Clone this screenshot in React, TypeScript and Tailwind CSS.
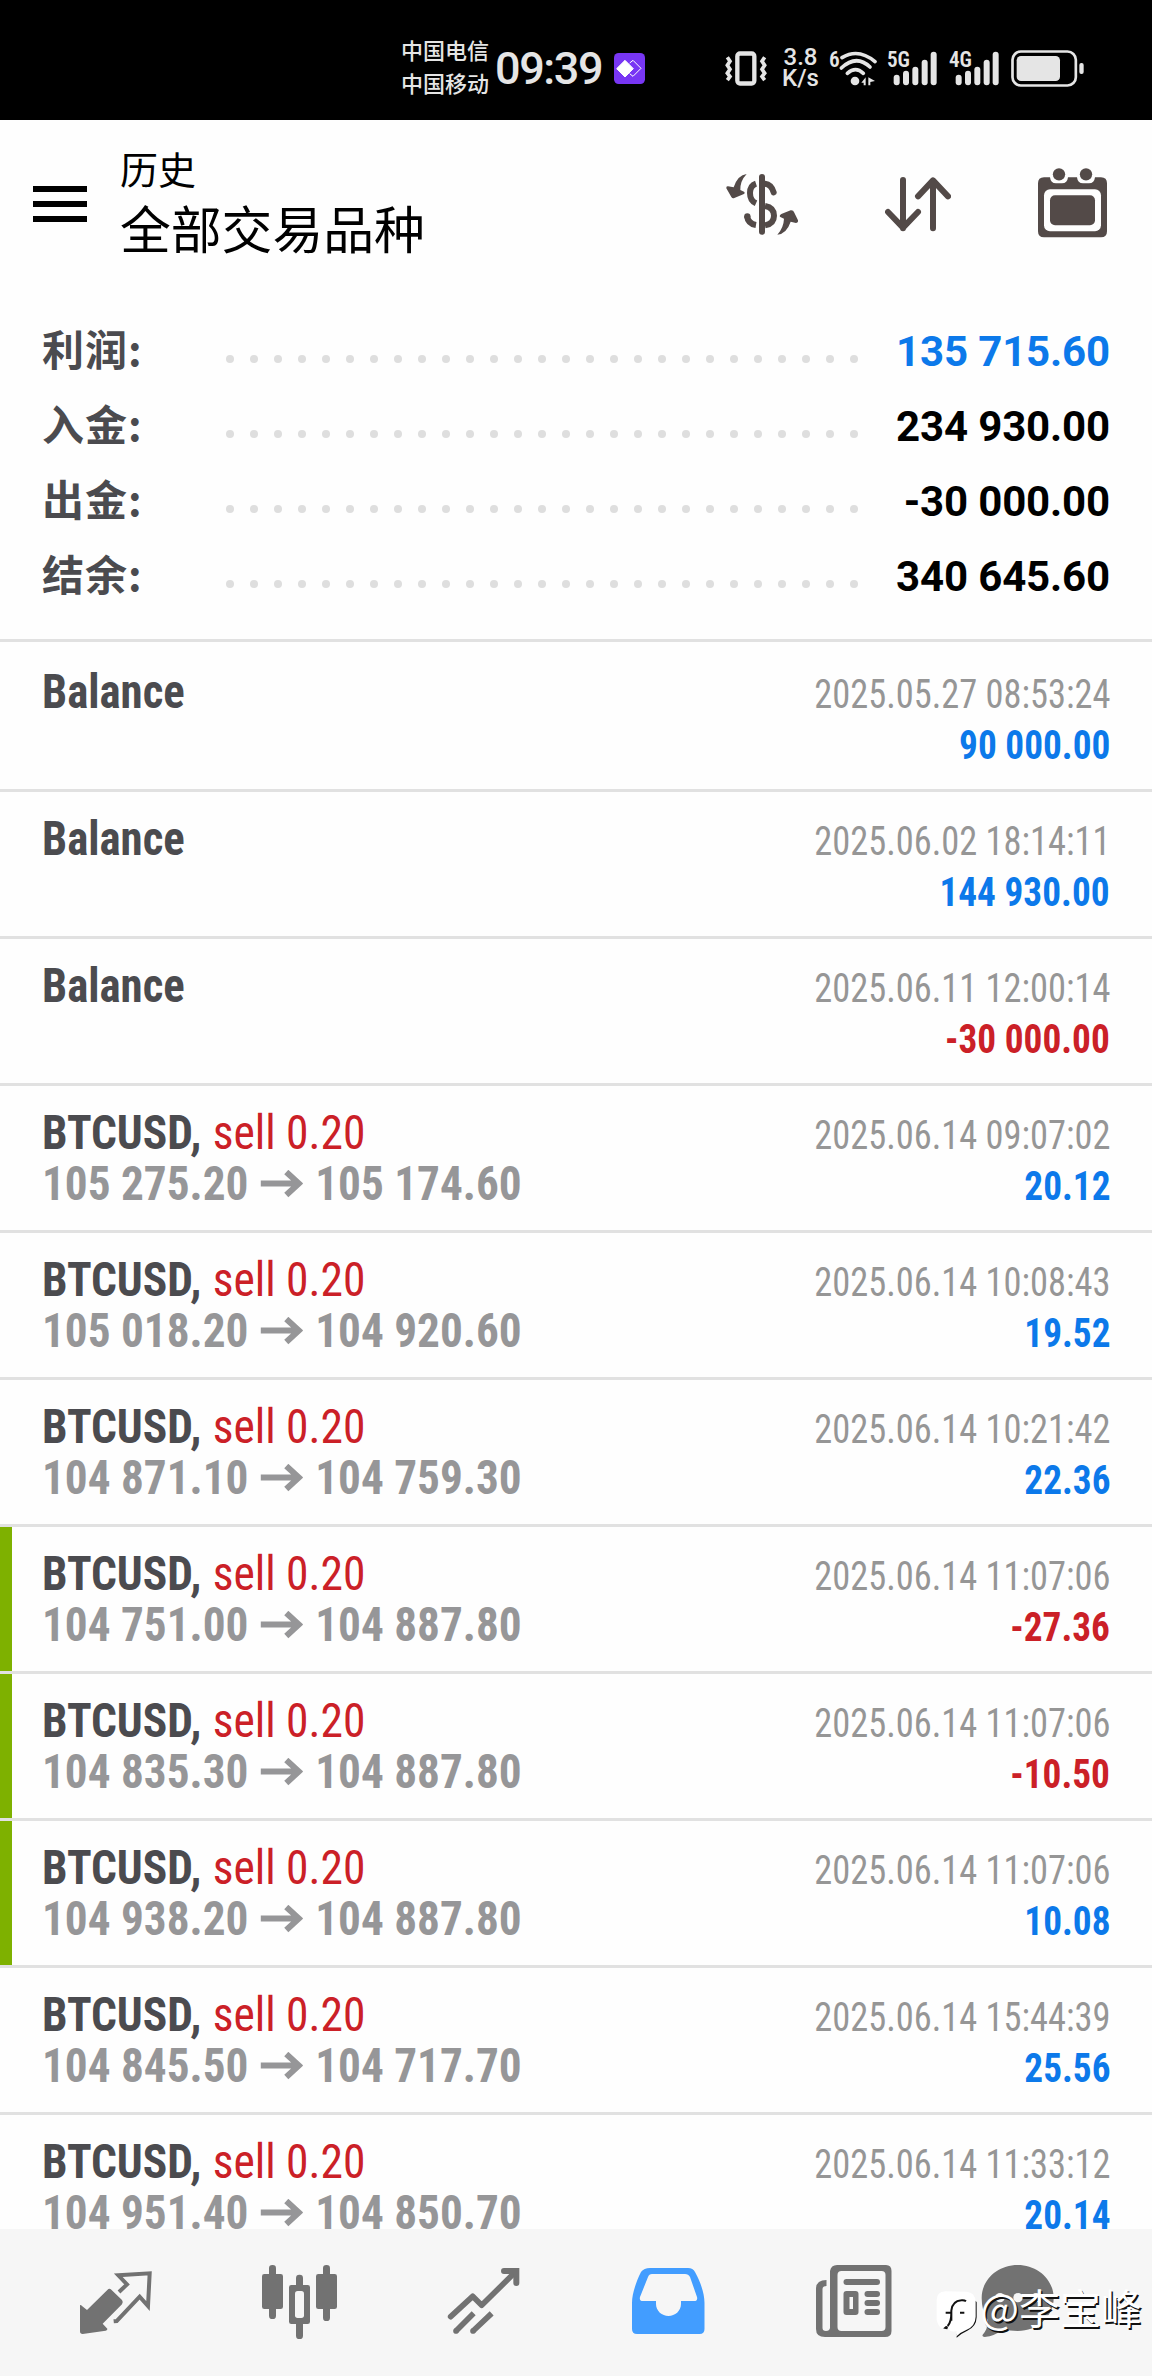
import React from "react";
import clsx from "clsx";

interface SummaryItem {
  label: string;
  value: string;
  positive?: boolean;
}

interface Deal {
  time: string;
  amount: string;
  open?: string;
  close?: string;
  marked?: boolean;
}

const summary: SummaryItem[] = [
  { label: "利润:", value: "135 715.60", positive: true },
  { label: "入金:", value: "234 930.00" },
  { label: "出金:", value: "-30 000.00" },
  { label: "结余:", value: "340 645.60" },
];

const deals: Deal[] = [
  { time: "2025.05.27 08:53:24", amount: "90 000.00" },
  { time: "2025.06.02 18:14:11", amount: "144 930.00" },
  { time: "2025.06.11 12:00:14", amount: "-30 000.00" },
  { time: "2025.06.14 09:07:02", amount: "20.12", open: "105 275.20", close: "105 174.60" },
  { time: "2025.06.14 10:08:43", amount: "19.52", open: "105 018.20", close: "104 920.60" },
  { time: "2025.06.14 10:21:42", amount: "22.36", open: "104 871.10", close: "104 759.30" },
  { time: "2025.06.14 11:07:06", amount: "-27.36", open: "104 751.00", close: "104 887.80", marked: true },
  { time: "2025.06.14 11:07:06", amount: "-10.50", open: "104 835.30", close: "104 887.80", marked: true },
  { time: "2025.06.14 11:07:06", amount: "10.08", open: "104 938.20", close: "104 887.80", marked: true },
  { time: "2025.06.14 15:44:39", amount: "25.56", open: "104 845.50", close: "104 717.70" },
  { time: "2025.06.14 11:33:12", amount: "20.14", open: "104 951.40", close: "104 850.70" },
];

const SignalIcon: React.FC<{ label: string; className?: string }> = ({ label, className }) => (
  <svg viewBox="0 0 150 120" className={clsx("h-10 w-[50px]", className)} fill="#e5e5e5">
    <text x="0" y="58" fontSize="66" fontWeight="600" fontFamily="Roboto Condensed" textLength="69" lengthAdjust="spacingAndGlyphs">
      {label}
    </text>
    <rect x="20" y="80" width="18" height="32" rx="9" />
    <rect x="48" y="68" width="18" height="44" rx="9" />
    <rect x="76" y="56" width="18" height="56" rx="9" />
    <rect x="104" y="35" width="18" height="77" rx="9" />
    <rect x="131" y="11" width="18" height="101" rx="9" />
  </svg>
);

const StatusBar: React.FC = () => (
  <div className="flex h-[120px] flex-none items-center bg-black pt-4 pl-[401px] text-[#e5e5e5]">
    <div className="mb-[5px] w-[94px] font-['Noto_Sans_CJK_SC',sans-serif] text-[22px] leading-[33px] font-medium">
      <div>中国电信</div>
      <div>中国移动</div>
    </div>
    <div className="w-[119px] font-[Roboto,sans-serif] text-[45px] leading-none font-medium tracking-[-1.4px]">09:39</div>
    <svg viewBox="0 0 93 93" className="size-[31px]">
      <rect width="93" height="93" rx="14" fill="#7836f4" />
      <path d="M33 22 58 47 33 72 8 47Z" fill="#fff" stroke="#fff" strokeWidth="3" strokeLinejoin="round" />
      <path d="M47 30 57 22 81 46 57 70 47 62" fill="none" stroke="#fff" strokeWidth="3" />
    </svg>

    {/* Vibration mode */}
    <svg viewBox="0 0 126 104" className="ml-20 h-[35px] w-[42px]" fill="none" stroke="#e5e5e5">
      <rect x="37" y="7" width="51" height="90" rx="8" strokeWidth="13" />
      <path d="M7 18 15 30 7 42 15 54 7 66 15 76 7 87M119 18 111 30 119 42 111 54 119 66 111 76 119 87" strokeWidth="11" />
    </svg>
    <div className="ml-[15px] w-[37px] text-center font-[Roboto,sans-serif] text-[24px] leading-[21px] font-medium">
      <div>3.8</div>
      <div>K/s</div>
    </div>
    <svg viewBox="0 0 150 120" className="ml-2.5 h-10 w-[50px]" fill="none" stroke="#e5e5e5">
      <text x="0" y="57" fontSize="64" fontWeight="600" fontFamily="Roboto Condensed" fill="#e5e5e5" stroke="none">
        6
      </text>
      <g strokeWidth="11" strokeLinecap="round">
        <path d="M39 29Q88-1 138 41" />
        <path d="M37 60Q82 18 123 57" />
        <path d="M55 76Q80 54 103 76" />
      </g>
      <circle cx="78" cy="99" r="13" fill="#e5e5e5" stroke="none" />
      <path d="M97 104 110 88V112H104V104ZM118 112V88L138 99 124 102V112Z" fill="#e5e5e5" stroke="none" />
    </svg>
    <SignalIcon label="5G" className="ml-2" />
    <SignalIcon label="4G" className="ml-3" />
    <svg viewBox="0 0 219 111" className="ml-3 h-[37px] w-[73px]" fill="none">
      <rect x="4.500" y="4.500" width="190" height="102" rx="25" stroke="#e5e5e5" strokeWidth="8" />
      <rect x="17" y="18" width="130" height="75" rx="13" fill="#e5e5e5" />
      <rect x="205" y="39" width="13" height="33" rx="6" fill="#e5e5e5" />
    </svg>
  </div>
);

const Header: React.FC = () => (
  <header className="flex h-[166px] flex-none items-center pr-[45px] pl-[33px]">
    <div className="mt-[2px] flex flex-col gap-[9px]">
      <div className="h-1.5 w-[54px] bg-black" />
      <div className="h-1.5 w-[54px] bg-black" />
      <div className="h-1.5 w-[54px] bg-black" />
    </div>
    <div className="ml-[33px] flex-1 pb-[3px] font-['Noto_Sans_CJK_SC',sans-serif] text-black">
      <div className="text-[38px] leading-[52px]">历史</div>
      <div className="text-[50.800px] leading-[67px]">全部交易品种</div>
    </div>
    <div className="flex items-center gap-[87px]">
      <svg viewBox="78 80 216 219" className="h-[73px] w-[72px]" fill="#534a48">
        <rect x="177" y="101" width="18" height="182" rx="9" />
        <g fill="none" stroke="#534a48" strokeWidth="18">
          <path d="M168 130Q150 136 150 158 150 181 168 189" />
          <path d="M195 130Q214 132 221 156" strokeLinecap="round" />
          <path d="M195 197Q222 202 222 226 222 250 195 255" />
          <path d="M141 227Q144 250 168 254" />
        </g>
        <circle cx="142" cy="228" r="9.500" />
        <path d="M140 101Q113 104 101 141L84 138Q78 137 79 144L94 170Q97 175 103 173L130 162Q137 158 132 154L121 149Q120 122 140 101Z" />
        <path d="M232 283Q260 280 272 244L288 248Q295 247 294 240L283 217Q280 209 272 210L244 221Q236 226 241 230L252 235Q251 262 232 283Z" />
      </svg>
      <svg viewBox="555 80 198 219" className="h-[73px] w-[66px]" fill="none" stroke="#534a48" strokeWidth="18" strokeLinecap="round" strokeLinejoin="round">
        <path d="M609 119V264M564 215 609 262 654 215M699 264V121M654 168 699 120 744 168" />
      </svg>
      <svg viewBox="1014 80 207 219" className="h-[73px] w-[69px]" fill="#534a48">
        <path d="M1032 111H1050Q1052 129 1068 129H1086Q1102 129 1104 111H1131Q1133 129 1149 129H1167Q1183 129 1185 111H1203Q1221 111 1221 129V273Q1221 291 1203 291H1032Q1014 291 1014 273V129Q1014 111 1032 111Z" />
        <rect x="1032" y="147" width="171" height="126" rx="18" fill="#fefefe" />
        <rect x="1050" y="165" width="135" height="90" rx="15" />
        <circle cx="1077" cy="102" r="18.500" />
        <circle cx="1158" cy="102" r="18.500" />
      </svg>
    </div>
  </header>
);

const Summary: React.FC = () => (
  <section className="flex-none px-[42px] pt-[24px] pb-[29px]">
    {summary.map((item) => (
      <div key={item.label} className="flex h-[75px] items-baseline">
        <div className="w-[184px] font-['Noto_Sans_CJK_SC',sans-serif] text-[42px] leading-[75px] font-bold tracking-[1px] text-[#4b4b4f]">
          {item.label}
        </div>
        <div className="flex w-[632px] -translate-y-[3px] justify-between">
          {Array.from({ length: 27 }, (_, i) => (
            <div key={i} className="h-2 w-2 rounded-full bg-[#dedede]" />
          ))}
        </div>
        <div
          className={clsx(
            "flex-1 text-right font-[Roboto,sans-serif] text-[42px] leading-[75px] font-bold tracking-[-0.150px] whitespace-nowrap",
            item.positive ? "text-[#0c79ea]" : "text-black"
          )}
        >
          {item.value}
        </div>
      </div>
    ))}
  </section>
);

const DealRow: React.FC<{ deal: Deal; first: boolean }> = ({ deal, first }) => (
  <div className={clsx("flex flex-none border-t-[3px] border-[#e1e1e1]", first ? "h-[150px]" : "h-[147px]")}>
    <div className={clsx("w-3", deal.marked && "bg-[#7eb100]")} />
    <div
      className={clsx(
        "flex-1 pr-[42px] pl-[30px] font-['Roboto_Condensed',Roboto,sans-serif] leading-[51px] whitespace-nowrap",
        first ? "pt-6" : "pt-[21px]"
      )}
    >
      <div className="flex h-[51px] items-baseline justify-between">
        <div className={clsx("origin-left text-[48px] text-[#cb2027]", deal.open ? "scale-x-[0.947]" : "scale-x-[0.933]")}>
          <span className="font-bold text-[#4b4b4f]">{deal.open ? "BTCUSD," : "Balance"}</span>
          {deal.open && <span className="ml-[12px]">sell 0.20</span>}
        </div>
        <div className="origin-right scale-x-[0.910] text-[40px] text-[#969696]">{deal.time}</div>
      </div>
      <div className="flex h-[51px] items-baseline justify-between">
        <div className="flex origin-left scale-x-[0.942] items-baseline text-[48px] font-bold text-[#969698]">
          {deal.open ? (
            <>
              <span>{deal.open}</span>
              <svg viewBox="0 2 42 30" preserveAspectRatio="none" className="mr-[13px] ml-[13px] h-[30px] w-[45px]" fill="none" stroke="#969698" strokeWidth="6">
                <path d="M0 15.500H38M25.500 4 38 15.500 25.500 27" />
              </svg>
              <span>{deal.close}</span>
            </>
          ) : (
            "\u00a0"
          )}
        </div>
        <div
          className={clsx(
            "origin-right scale-x-[0.932] text-[40px] font-bold",
            deal.amount.startsWith("-") ? "text-[#cb2027]" : "text-[#0c79ea]"
          )}
        >
          {deal.amount}
        </div>
      </div>
    </div>
  </div>
);

const BottomNav: React.FC = () => (
  <nav className="flex h-[147px] flex-none bg-[#f6f6f6] px-6">
    <svg viewBox="-108 -63 552 441" className="h-[147px] w-[184px]" fill="#727272">
      <path d="M60 166Q62 163 66 168L81 180 142 120Q148 113 154 119L186 150Q191 157 186 163L128 221 142 236Q143 241 137 242L68 252Q60 252 60 244Z" />
      <path d="M177 126 201 103 175 76 269 70 264 168 239 140 170 213 161 214" fill="none" stroke="#727272" strokeWidth="12" />
    </svg>
    <svg viewBox="444 -63 552 441" className="h-[147px] w-[184px]" fill="#727272">
      <rect x="627" y="45" width="21" height="162" rx="10" />
      <rect x="606" y="72" width="63" height="105" rx="7" />
      <rect x="789" y="45" width="21" height="168" rx="10" />
      <rect x="768" y="72" width="63" height="105" rx="7" />
      <rect x="708" y="74" width="21" height="193" rx="10" />
      <rect x="687" y="105" width="63" height="117" rx="7" />
      <rect x="705" y="123" width="27" height="81" rx="8" fill="#f6f6f6" />
    </svg>
    <svg viewBox="996 -63 552 441" className="h-[147px] w-[184px]" fill="none" stroke="#727272" strokeWidth="17" strokeLinejoin="round">
      <path d="M1172 200 1238 139 1265 166 1368 64" strokeLinecap="round" />
      <path d="M1332 63H1369V99" strokeWidth="18" strokeLinecap="round" strokeLinejoin="miter" />
      <path d="M1241 190 1188 243M1295 190 1239 243" />
      <g fill="#727272" stroke="none">
        <circle cx="1188" cy="243" r="8.500" />
        <circle cx="1239" cy="243" r="8.500" />
      </g>
    </svg>
    <svg viewBox="576 2229 184 147" className="h-[147px] w-[184px]">
      <path d="M650 2268H688Q693 2268 695 2272C701 2283 704.500 2294 704.500 2303V2329Q704.500 2334 699.500 2334H637Q632 2334 632 2329V2303C632 2294 636 2282 641 2272Q644 2268 650 2268Z" fill="#429dff" />
      <path d="M652 2274H685Q688.500 2274 690 2277L697 2297Q698 2301 694 2301H681V2304C681 2311 675 2316 668.500 2316S656 2311 656 2304V2301H643Q639 2301 640 2297L648 2277Q649 2274 652 2274Z" fill="#f6f6f6" />
    </svg>
    <svg viewBox="760 2229 184 147" className="h-[147px] w-[184px]" fill="#727272">
      <path d="M826.500 2280V2286Q822.500 2286 822.500 2289V2328Q822.500 2331 826 2331T830 2328V2271Q831 2265 837 2265H886Q891.500 2265 891.500 2271V2331Q891.500 2337 885 2337H825Q816 2337 816 2329V2289Q816 2280 826.500 2280Z" />
      <rect x="837.500" y="2271" width="48" height="60" rx="4" fill="#f6f6f6" />
      <rect x="843.500" y="2279" width="36.500" height="6" rx="3" />
      <rect x="843.500" y="2291" width="15" height="24" rx="3" />
      <rect x="849.500" y="2297" width="3.500" height="12" fill="#f6f6f6" />
      <rect x="864.500" y="2291" width="15.500" height="6" rx="3" />
      <rect x="864.500" y="2300" width="15.500" height="6" rx="3" />
      <rect x="864.500" y="2309" width="15.500" height="6" rx="3" />
    </svg>
    <svg viewBox="42 -63 552 441" className="h-[147px] w-[184px]">
      <path d="M263 45C323 45 371 89 371 144S323 243 263 243C247 243 232 240 222 237Q194 258 164 261 155 260 158 254 175 236 173 210 155 183 155 144C155 89 203 45 263 45Z" fill="#727272" />
      <circle cx="210" cy="143" r="14" fill="#f6f6f6" />
      <circle cx="264" cy="143" r="14" fill="#f6f6f6" />
      <circle cx="318" cy="143" r="14" fill="#f6f6f6" />
    </svg>
  </nav>
);

const Watermark: React.FC = () => (
  <div className="absolute right-[10px] bottom-[38px] flex items-end">
    <svg viewBox="18 118 126 144" className="h-12 w-[42px]">
      <path d="M137 150 140 155V200Q139 229 112 240 94 248 80 261L79 252ZM24 215Q34 236 52 236L54 228Z" fill="#111" />
      <path d="M20 148Q20 124 46 122L110 123Q135 125 137 153V198Q136 226 110 237 92 244 78 258L80 240Q62 248 54 231L62 214 38 234Q24 228 20 207Z" fill="#fff" />
      <path d="M47 186H65M90 186H103M64 210V180Q67 151 94 149 103 148 108 152M64 186Q64 214 53 226" fill="none" stroke="#111" strokeWidth="6" />
    </svg>
    <div className="mb-[7px] ml-[2px] font-['Noto_Sans_CJK_SC',sans-serif] text-[41px] leading-[50px] whitespace-nowrap text-white [text-shadow:1.5px_1.5px_0_#111]">
      @李宝峰
    </div>
  </div>
);

export default function App() {
  return (
    <div className="relative flex h-[2376px] w-[1152px] flex-col overflow-hidden bg-[#fefefe]">
      <StatusBar />
      <Header />
      <Summary />
      <main className="flex min-h-0 flex-1 flex-col overflow-hidden">
        {deals.map((deal, i) => (
          <DealRow key={i} deal={deal} first={i === 0} />
        ))}
      </main>
      <BottomNav />
      <Watermark />
    </div>
  );
}
